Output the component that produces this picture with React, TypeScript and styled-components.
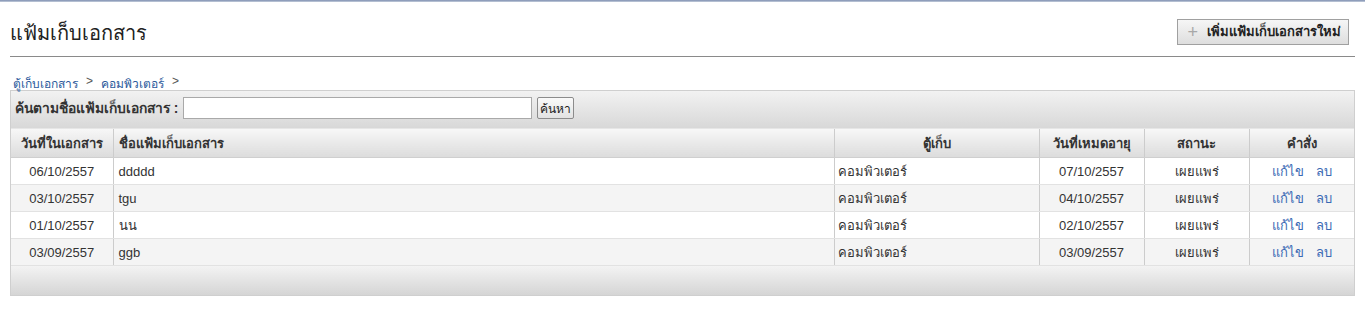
import * as React from "react";
import styled, { createGlobalStyle } from "styled-components";

interface IFolder {
  date: string;
  name: string;
  owner: string;
  expire: string;
  status: string;
}

const FOLDERS: IFolder[] = [
  { date: "06/10/2557", name: "ddddd", owner: "คอมพิวเตอร์", expire: "07/10/2557", status: "เผยแพร่" },
  { date: "03/10/2557", name: "tgu", owner: "คอมพิวเตอร์", expire: "04/10/2557", status: "เผยแพร่" },
  { date: "01/10/2557", name: "นน", owner: "คอมพิวเตอร์", expire: "02/10/2557", status: "เผยแพร่" },
  { date: "03/09/2557", name: "ggb", owner: "คอมพิวเตอร์", expire: "03/09/2557", status: "เผยแพร่" }
];

const GlobalStyle = createGlobalStyle`
  body {
    margin: 0;
    background: #fff;
    font-family: "Liberation Sans", "Noto Sans", sans-serif;
    font-size: 13px;
    color: #333;
  }
`;

const TopLine = styled.div`
  height: 2px;
  background: linear-gradient(#7d8db0, #c5cedc);
`;

const Page = styled.div`
  padding: 0 10px;
`;

const Header = styled.div`
  display: flex;
  align-items: center;
  justify-content: space-between;
  height: 54px;
  padding-right: 6px;
  border-bottom: 1px solid #8a8a8a;
`;

const Title = styled.h1`
  margin: 8px 0 0;
  font-size: 20px;
  font-weight: normal;
  color: #222;
`;

const AddButton = styled.button`
  display: flex;
  align-items: center;
  gap: 9px;
  height: 26px;
  margin-top: 5px;
  padding: 0 7px 0 9px;
  border: 1px solid #a0a0a0;
  background: linear-gradient(#f6f6f6, #dedede);
  font-family: inherit;
  font-size: 13px;
  font-weight: bold;
  color: #222;
`;

const Plus = styled.span`
  font-size: 18px;
  font-weight: normal;
  color: #a8a8a8;
  line-height: 1;
`;

const Breadcrumb = styled.div`
  display: flex;
  gap: 8px;
  padding: 17px 0 0 3px;
  height: 16px;
  font-size: 12px;
  color: #555;
`;

const Crumb = styled.a`
  color: #2b5a9c;
  text-decoration: none;
`;

const Panel = styled.div`
  border: 1px solid #cfcfcf;
`;

const SearchBar = styled.div`
  display: flex;
  align-items: center;
  gap: 3px;
  height: 38px;
  padding: 0 0 3px 4px;
  box-sizing: border-box;
  background: linear-gradient(#f2f2f2, #d8d8d8);
  border-bottom: 1px solid #e6e6e6;
  font-size: 13.8px;
  font-weight: bold;
`;

const SearchInput = styled.input`
  width: 349px;
  height: 22px;
  box-sizing: border-box;
  margin: 0 2px 0 2px;
  border: 1px solid #a9a9a9;
  background: #fff;
`;

const SearchButton = styled.button`
  height: 22px;
  width: 37px;
  padding: 0;
  border: 1px solid #8c8c8c;
  border-radius: 2px;
  background: linear-gradient(#fafafa, #e2e2e2);
  font-family: inherit;
  font-size: 12px;
  color: #222;
`;

const Table = styled.table`
  width: 100%;
  border-collapse: collapse;
  table-layout: fixed;
`;

const Th = styled.th<{ $align?: string }>`
  height: 28px;
  padding: 0 5px;
  background: linear-gradient(#f7f7f7, #dcdcdc);
  border-left: 1px solid #cccccc;
  border-bottom: 1px solid #cfcfcf;
  text-align: ${p => p.$align || "center"};
  font-weight: bold;
  color: #333;

  &:first-child {
    border-left: none;
  }
`;

const Row = styled.tr<{ $alt: boolean }>`
  background: ${p => (p.$alt ? "#f4f4f4" : "#ffffff")};
`;

const Td = styled.td<{ $align?: string }>`
  height: 26px;
  padding: 0 5px;
  border-left: 1px solid #cccccc;
  border-bottom: 1px solid #e2e2e2;
  text-align: ${p => p.$align || "center"};
  color: #333;
  white-space: nowrap;

  &:first-child {
    border-left: none;
  }
`;

const OwnerTd = styled(Td)`
  padding-left: 3px;
`;

const Action = styled.a`
  color: #3a6ab4;
  text-decoration: none;
  margin: 0 6px;
`;

const Footer = styled.div`
  height: 29px;
  background: linear-gradient(#f3f3f3, #d5d5d5);
`;

const App: React.FC = () => (
  <>
    <GlobalStyle />
    <TopLine />
    <Page>
      <Header>
        <Title>แฟ้มเก็บเอกสาร</Title>
        <AddButton>
          <Plus>+</Plus>
          เพิ่มแฟ้มเก็บเอกสารใหม่
        </AddButton>
      </Header>
      <Breadcrumb>
        <Crumb href="#">ตู้เก็บเอกสาร</Crumb>
        <span>&gt;</span>
        <Crumb href="#">คอมพิวเตอร์</Crumb>
        <span>&gt;</span>
      </Breadcrumb>
      <Panel>
        <SearchBar>
          ค้นตามชื่อแฟ้มเก็บเอกสาร :
          <SearchInput type="text" />
          <SearchButton>ค้นหา</SearchButton>
        </SearchBar>
        <Table>
          <colgroup>
            <col style={{ width: 102 }} />
            <col />
            <col style={{ width: 205 }} />
            <col style={{ width: 105 }} />
            <col style={{ width: 105 }} />
            <col style={{ width: 105 }} />
          </colgroup>
          <thead>
            <tr>
              <Th>วันที่ในเอกสาร</Th>
              <Th $align="left">ชื่อแฟ้มเก็บเอกสาร</Th>
              <Th>ตู้เก็บ</Th>
              <Th>วันที่เหมดอายุ</Th>
              <Th>สถานะ</Th>
              <Th>คำสั่ง</Th>
            </tr>
          </thead>
          <tbody>
            {FOLDERS.map((f, i) => (
              <Row key={i} $alt={i % 2 === 1}>
                <Td>{f.date}</Td>
                <Td $align="left">{f.name}</Td>
                <OwnerTd $align="left">{f.owner}</OwnerTd>
                <Td>{f.expire}</Td>
                <Td>{f.status}</Td>
                <Td>
                  <Action href="#">แก้ไข</Action>
                  <Action href="#">ลบ</Action>
                </Td>
              </Row>
            ))}
          </tbody>
        </Table>
        <Footer />
      </Panel>
    </Page>
  </>
);

export default App;
